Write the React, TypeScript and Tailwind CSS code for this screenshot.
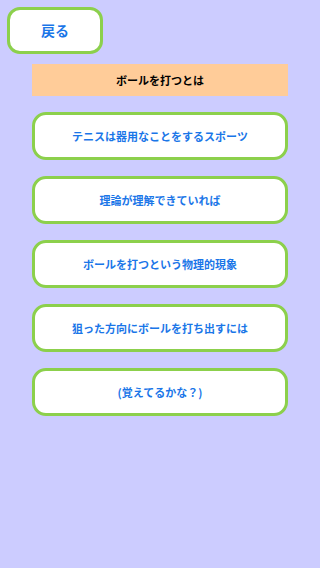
const items = [
  'テニスは器用なことをするスポーツ',
  '理論が理解できていれば',
  'ボールを打つという物理的現象',
  '狙った方向にボールを打ち出すには',
  '(覚えてるかな？)',
];

export default function App() {
  return (
    <div
      className="min-h-[568px] w-[320px] bg-[#ccccff] pl-[7px] pt-[7px]"
      style={{ fontFamily: '"Noto Sans CJK JP", "Noto Sans", sans-serif' }}
    >
      <button className="flex h-[47px] w-[96px] items-center justify-center rounded-[13px] border-[3px] border-[#8cd04c] bg-white text-[14px] font-bold text-[#1a76e8]">
        戻る
      </button>
      <div className="ml-[25px] mt-[10px] flex w-[256px] flex-col gap-[16px]">
        <div className="flex h-[32px] items-center justify-center bg-[#ffcc99] text-[11px] font-bold text-black">
          ボールを打つとは
        </div>
        {items.map((label, i) => (
          <button
            key={i}
            className="flex h-[48px] w-full items-center justify-center rounded-[14px] border-[3px] border-[#8cd04c] bg-white text-[11px] font-bold text-[#1a76e8]"
          >
            {label}
          </button>
        ))}
      </div>
    </div>
  );
}
